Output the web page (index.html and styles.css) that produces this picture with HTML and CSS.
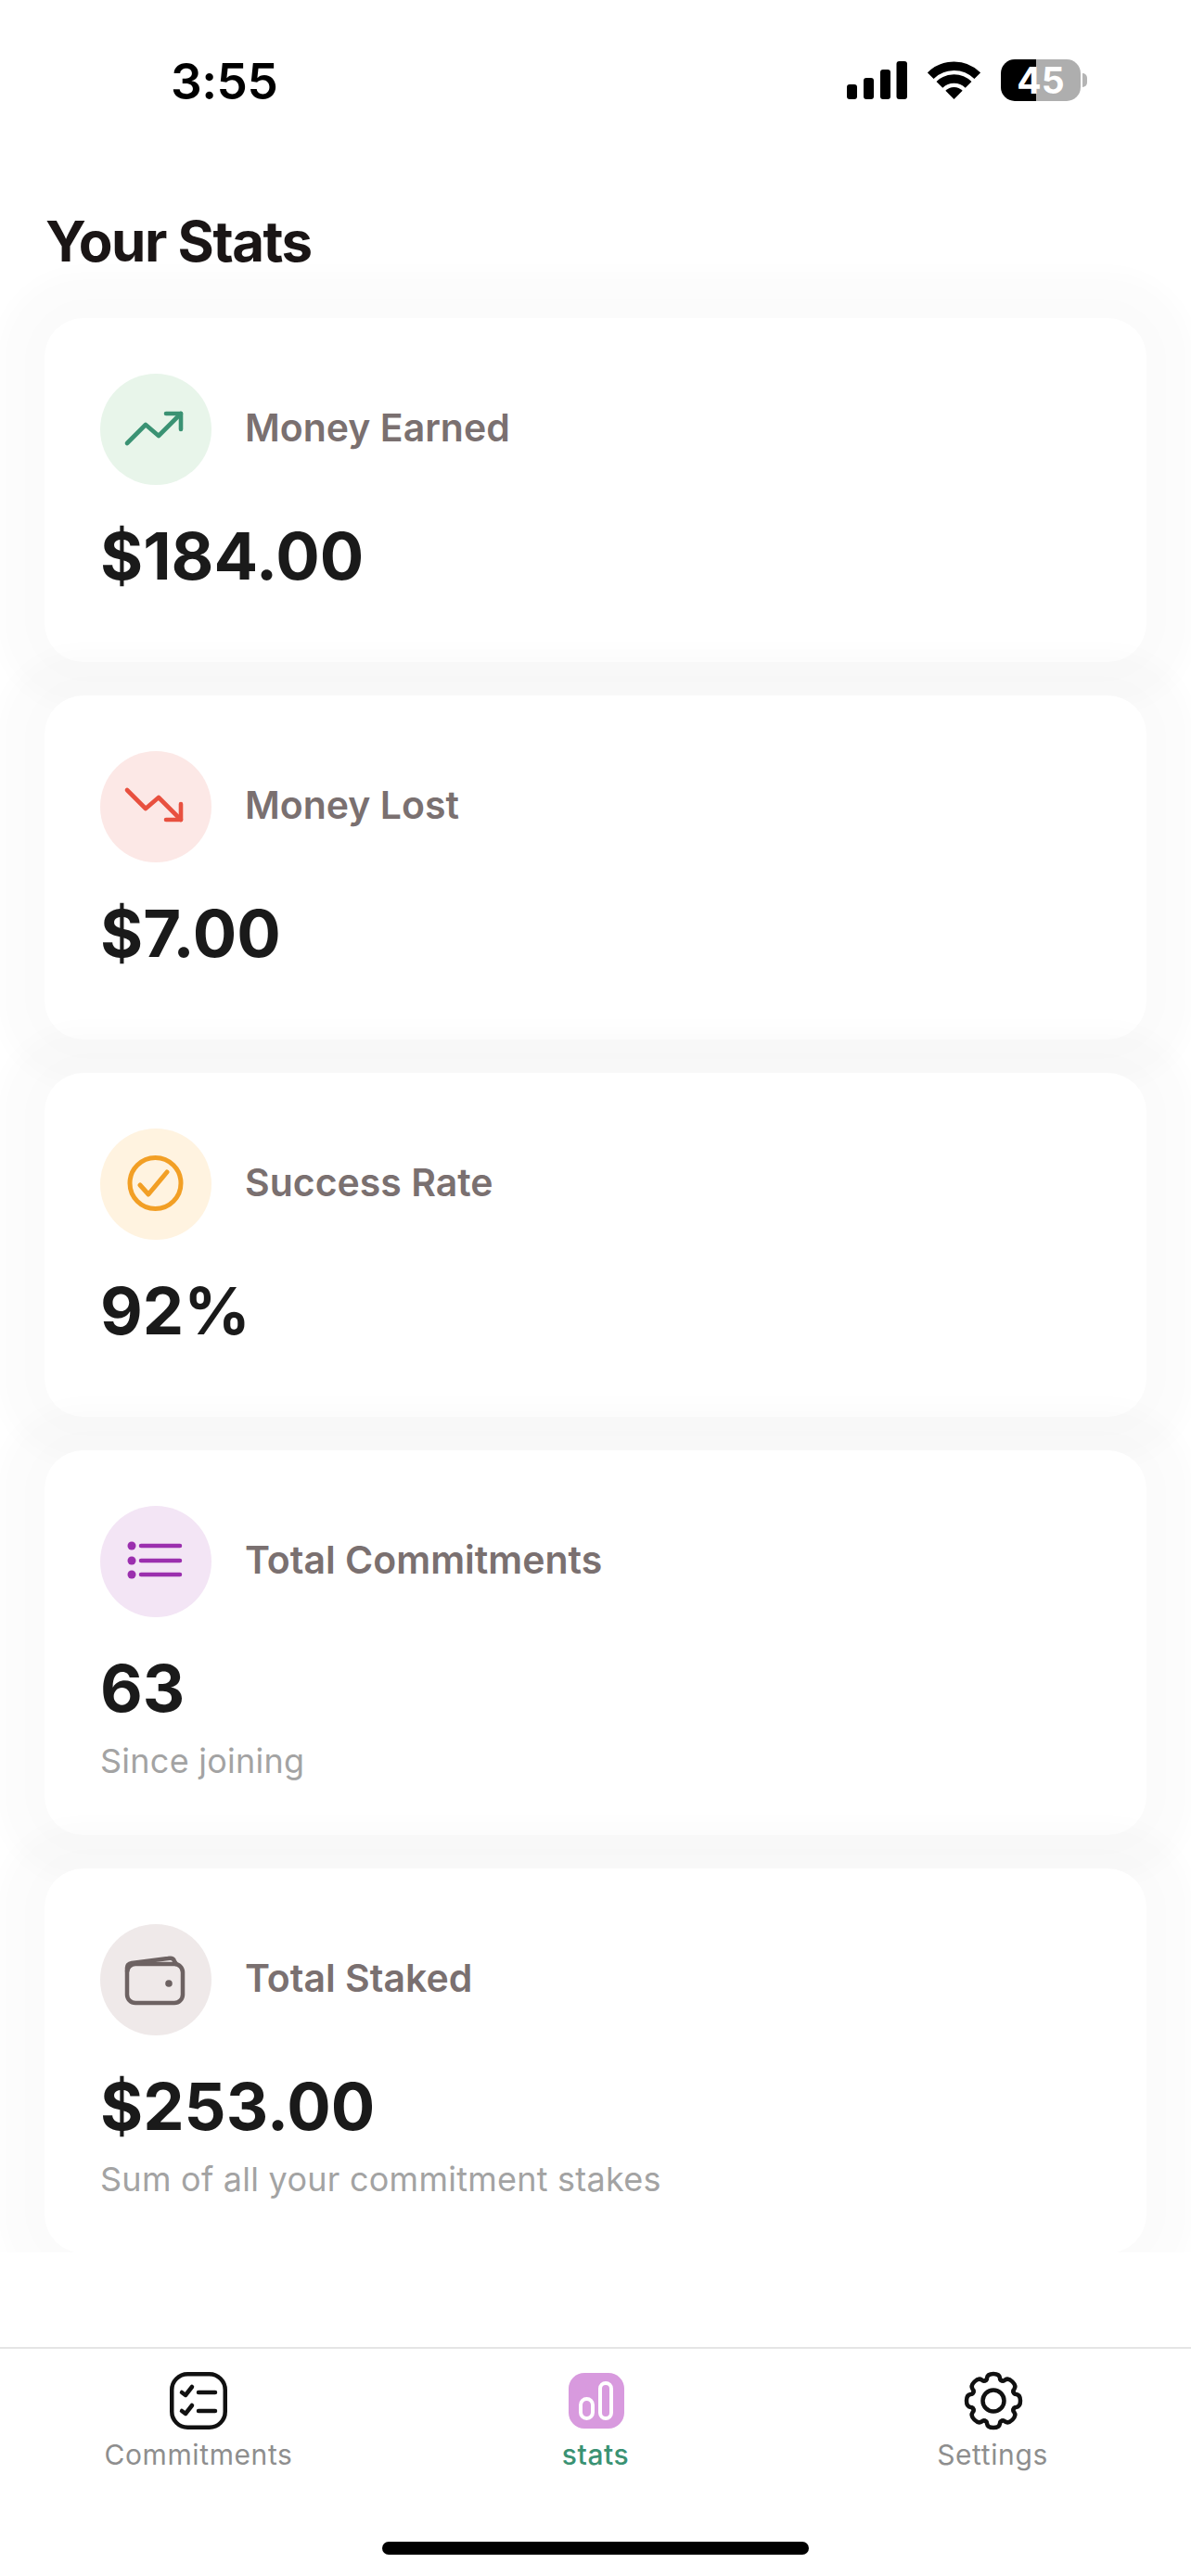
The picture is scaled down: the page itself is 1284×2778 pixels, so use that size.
FILE: index.html
```html
<!DOCTYPE html>
<html lang="en">
<head>
<meta charset="utf-8">
<title>Your Stats</title>
<link rel="stylesheet" href="styles.css">
</head>
<body>
<div class="screen">
  <header class="status">
    <span class="time">3:55</span>
    <div class="status-icons">
      <svg class="signal" width="65" height="41" viewBox="0 0 65 41"><rect x="0" y="25" width="11" height="16" rx="3"/><rect x="18" y="18" width="11" height="23" rx="3"/><rect x="36" y="9" width="11" height="32" rx="3"/><rect x="53.5" y="0" width="11.5" height="41" rx="3"/></svg>
      <svg class="wifi" width="57" height="41" viewBox="0 0 57 41"><path d="M3.2 15.7A35.75 35.75 0 0 1 53.8 15.7" fill="none" stroke="#000" stroke-width="9.5"/><path d="M12.9 25.4A22 22 0 0 1 44.1 25.4" fill="none" stroke="#000" stroke-width="9.5"/><path d="M19.3 31.8A13 13 0 0 1 37.7 31.8L28.5 41Z"/></svg>
      <div class="battery"><span class="battery-level">45</span><span class="battery-nub"></span></div>
    </div>
  </header>
  <h1 class="title">Your Stats</h1>
  <main class="scroll">
    <section class="card">
      <div class="card-head">
        <div class="badge badge-green"><svg width="120" height="120" viewBox="0 0 120 120" fill="none" stroke="#3a9273" stroke-width="4.6" stroke-linecap="round" stroke-linejoin="round"><path d="M29 75L49 55L63 67L87 43"/><path d="M71 43H87V60"/></svg></div>
        <span class="label">Money Earned</span>
      </div>
      <div class="value">$184.00</div>
    </section>
    <section class="card">
      <div class="card-head">
        <div class="badge badge-red"><svg width="120" height="120" viewBox="0 0 120 120" fill="none" stroke="#e8503f" stroke-width="4.6" stroke-linecap="round" stroke-linejoin="round"><path d="M29 42L49 62L63 50L87 74"/><path d="M71 74H87V57"/></svg></div>
        <span class="label">Money Lost</span>
      </div>
      <div class="value">$7.00</div>
    </section>
    <section class="card">
      <div class="card-head">
        <div class="badge badge-orange"><svg width="120" height="120" viewBox="0 0 120 120" fill="none" stroke="#f29f25" stroke-width="5" stroke-linecap="round" stroke-linejoin="round"><circle cx="59.5" cy="59" r="27.5"/><path d="M43 61L52 71L72 47"/></svg></div>
        <span class="label">Success Rate</span>
      </div>
      <div class="value">92%</div>
    </section>
    <section class="card">
      <div class="card-head">
        <div class="badge badge-purple"><svg width="120" height="120" viewBox="0 0 120 120" fill="#9b2fae" stroke="none"><circle cx="34" cy="43" r="4.5"/><circle cx="34" cy="59" r="4.5"/><circle cx="34" cy="74" r="4.5"/><path d="M44 43H86M44 59H86M44 74H86" stroke="#9b2fae" stroke-width="4.5" stroke-linecap="round"/></svg></div>
        <span class="label">Total Commitments</span>
      </div>
      <div class="value">63</div>
      <div class="sub">Since joining</div>
    </section>
    <section class="card">
      <div class="card-head">
        <div class="badge badge-taupe"><svg width="120" height="120" viewBox="0 0 120 120" fill="none" stroke="#6d6262" stroke-width="4.5" stroke-linecap="round" stroke-linejoin="round"><rect x="29" y="43" width="60" height="42" rx="9"/><path d="M29 51V47Q29 43 34 42L73 37Q79 36 80 40L82 43"/><circle cx="74" cy="64" r="3.8" fill="#6d6262" stroke="none"/></svg></div>
        <span class="label">Total Staked</span>
      </div>
      <div class="value">$253.00</div>
      <div class="sub">Sum of all your commitment stakes</div>
    </section>
  </main>
  <nav class="tabs">
    <div class="tab">
      <svg width="66" height="66" viewBox="0 0 66 66" fill="none" stroke="#111" stroke-width="4.5" stroke-linecap="round" stroke-linejoin="round"><rect x="4.25" y="4.25" width="57.5" height="57.5" rx="17"/><path d="M15 24L19 27L26 18M15 44L19 47L26 38"/><path d="M33 24H51M33 44H51"/></svg>
      <span class="tab-label">Commitments</span>
    </div>
    <div class="tab">
      <svg width="66" height="66" viewBox="0 0 66 66" fill="none" stroke="#fff" stroke-width="4"><rect x="4" y="3" width="60" height="60" rx="17" fill="#d89ade" stroke="none"/><rect x="17" y="31" width="13" height="21" rx="6.5"/><rect x="38" y="14" width="12" height="38" rx="6"/></svg>
      <span class="tab-label tab-label-active">stats</span>
    </div>
    <div class="tab">
      <svg width="66" height="66" viewBox="-34 -33 66 66" fill="none" stroke="#111" stroke-width="4.5" stroke-linecap="round" stroke-linejoin="round">
        <defs><path id="tooth" d="M-9-21.7Q-7-22.2-7-24.6Q-6.3-29 0-29Q6.3-29 7-24.6Q7-22.2 9-21.7"/></defs>
        <use href="#tooth"/><use href="#tooth" transform="rotate(45)"/><use href="#tooth" transform="rotate(90)"/><use href="#tooth" transform="rotate(135)"/><use href="#tooth" transform="rotate(180)"/><use href="#tooth" transform="rotate(225)"/><use href="#tooth" transform="rotate(270)"/><use href="#tooth" transform="rotate(315)"/>
        <circle r="11.5"/>
      </svg>
      <span class="tab-label">Settings</span>
    </div>
    <div class="home-indicator"></div>
  </nav>
</div>
</body>
</html>
```

FILE: styles.css
```css
* { box-sizing: border-box; }
html, body { margin: 0; padding: 0; background: #fff; }
body { font-family: Inter, "Liberation Sans", sans-serif; }
.screen { width: 1284px; height: 2778px; display: flex; flex-direction: column; overflow: hidden; background: #fff; }

.status { height: 172px; flex: none; display: flex; justify-content: space-between; align-items: flex-start; padding: 64px 119px 0 184px; }
.time { padding-top: 2px; font-size: 53px; line-height: 45px; font-weight: 600; color: #000; letter-spacing: -0.5px; }
.status-icons { display: flex; align-items: center; gap: 22px; }
.signal, .wifi { display: block; fill: #000; }
.battery { position: relative; width: 86px; height: 45px; border-radius: 15px; background: linear-gradient(90deg, #000 44%, #aeaeae 44%); display: flex; align-items: center; justify-content: center; }
.battery-level { color: #fff; font-size: 39px; font-weight: 700; line-height: 45px; }
.battery-nub { position: absolute; left: 88px; top: 15px; width: 5px; height: 15px; border-radius: 0 8px 8px 0; background: #b4b4b4; }

.title { flex: none; margin: 0; height: 113px; padding: 58px 0 0 49px; font-size: 60px; line-height: 60px; font-weight: 700; color: #1a1515; letter-spacing: -1.5px; }
.scroll { height: 2144px; flex: none; overflow: hidden; margin-bottom: 102px; padding: 58px 48px 0; display: flex; flex-direction: column; gap: 36px; }

.card { flex: none; background: #fff; border-radius: 42px; padding: 60px; box-shadow: 0 0 24px 50px rgba(0,0,0,.017); }
.card-head { display: flex; align-items: center; gap: 36px; margin-bottom: 35px; }
.badge { width: 120px; height: 120px; border-radius: 50%; flex: none; }
.badge svg { display: block; }
.badge-green { background: #e8f5ea; }
.badge-red { background: #fce8e6; }
.badge-orange { background: #fff3e0; }
.badge-purple { background: #f3e5f5; }
.badge-taupe { background: #efe9e9; }
.label { font-size: 41px; line-height: 47px; padding-bottom: 3px; font-weight: 600; color: #7a7070; }
.value { font-size: 70.5px; line-height: 84px; font-weight: 700; color: #1a1a1a; margin-bottom: 12px; }
.sub { font-size: 36px; line-height: 40px; margin-top: 16px; color: #a3a3a3; letter-spacing: 0.25px; }

.tabs { position: relative; flex: 1; display: grid; grid-template-columns: repeat(3, 1fr); align-items: start; border-top: 2px solid #e5e5e5; padding-top: 23px; }
.tab { display: flex; flex-direction: column; align-items: center; gap: 5px; }
.tab svg { display: block; }
.tab-label { font-size: 30px; line-height: 40px; font-weight: 400; color: #8e8e8e; letter-spacing: 0.6px; }
.tab-label-active { color: #3a9273; font-weight: 500; }
.home-indicator { position: absolute; left: 412px; top: 208px; width: 460px; height: 14px; border-radius: 7px; background: #000; }
```
